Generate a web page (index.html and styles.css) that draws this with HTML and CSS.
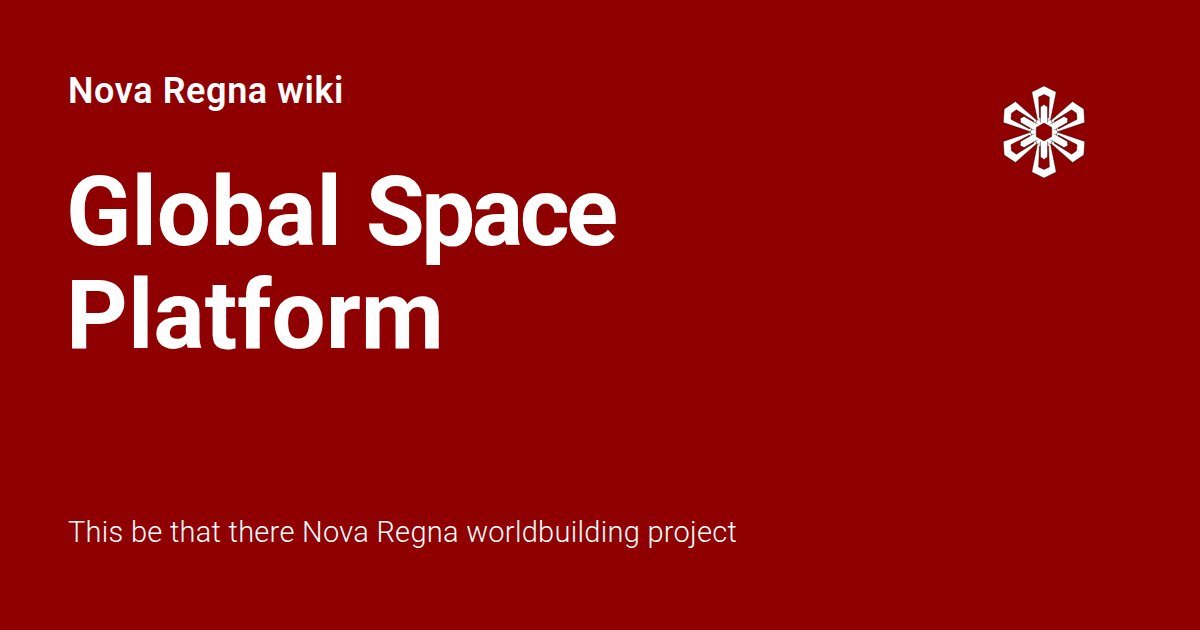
FILE: index.html
```html
<!DOCTYPE html>
<html lang="en">
<head>
    <meta charset="UTF-8">
    <title>Global Space Platform</title>
    <link rel="stylesheet" href="styles.css">
</head>
<body>
    <div class="card">
        <div class="card-main">
            <div class="site-name">Nova Regna wiki</div>
            <h1 class="page-title">Global <span class="title-tight">Space</span> Platform</h1>
            <p class="description">This be that there Nova Regna worldbuilding project</p>
        </div>
        <svg class="logo" viewBox="-48 -48 96 96" width="96" height="96">
            <defs>
                <g id="petal">
                    <path class="petal-outer" fill-rule="evenodd" d="M0 -46 L12.2 -40 L6.5 -12 L-6.5 -12 L-12.2 -40 Z M0 -37.5 L-5.4 -35 L-4.6 -14 L4.6 -14 L5.4 -35 Z"/>
                    <path class="petal-bar" d="M0 -27.5 L3.5 -25 L3.5 -9 L-3.5 -9 L-3.5 -25 Z"/>
                </g>
            </defs>
            <path class="hub-ring" d="M12 -6.9 L12 6.9 L0 13.9 L-12 6.9 L-12 -6.9 L0 -13.9 Z" transform="rotate(30)"/>
            <use href="#petal"/>
            <use href="#petal" transform="rotate(60)"/>
            <use href="#petal" transform="rotate(120)"/>
            <use href="#petal" transform="rotate(180)"/>
            <use href="#petal" transform="rotate(240)"/>
            <use href="#petal" transform="rotate(300)"/>
            <path class="hub-ring" d="M9.9 -5.7 L9.9 5.7 L0 11.4 L-9.9 5.7 L-9.9 -5.7 L0 -11.4 Z"/>
            <path class="hub" d="M0 -9 L7.8 -4.5 L7.8 4.5 L0 9 L-7.8 4.5 L-7.8 -4.5 Z"/>
        </svg>
    </div>
</body>
</html>
```

FILE: styles.css
```css
* {
    margin: 0;
    padding: 0;
    box-sizing: border-box;
}

body {
    background: #8f0000;
    font-family: Roboto, sans-serif;
    color: white;
}

.card {
    width: 1200px;
    height: 630px;
    padding: 69px 108px 0 68px;
    display: flex;
    justify-content: space-between;
    align-items: flex-start;
    overflow: hidden;
}

.card-main {
    width: 640px;
}

.site-name {
    font-size: 36px;
    font-weight: 600;
    line-height: 44px;
    letter-spacing: 0.6px;
}

.page-title {
    margin: 48px 0 0 -2px;
    font-size: 96px;
    font-weight: 700;
    line-height: 103px;
}

.title-tight {
    letter-spacing: -3.5px;
}

.description {
    margin-top: 145px;
    font-size: 29px;
    font-weight: 300;
    line-height: 40px;
    letter-spacing: 0.28px;
    white-space: nowrap;
}

.logo {
    margin-top: 14.5px;
}

.petal-outer {
    fill: white;
    stroke: #1a0000;
    stroke-width: 0.4;
}

.petal-bar {
    fill: white;
    stroke: #1a0000;
    stroke-width: 0.4;
}

.hub-ring {
    fill: white;
}

.hub {
    fill: #8f0000;
    stroke: #1a0000;
    stroke-width: 0.4;
}
```
